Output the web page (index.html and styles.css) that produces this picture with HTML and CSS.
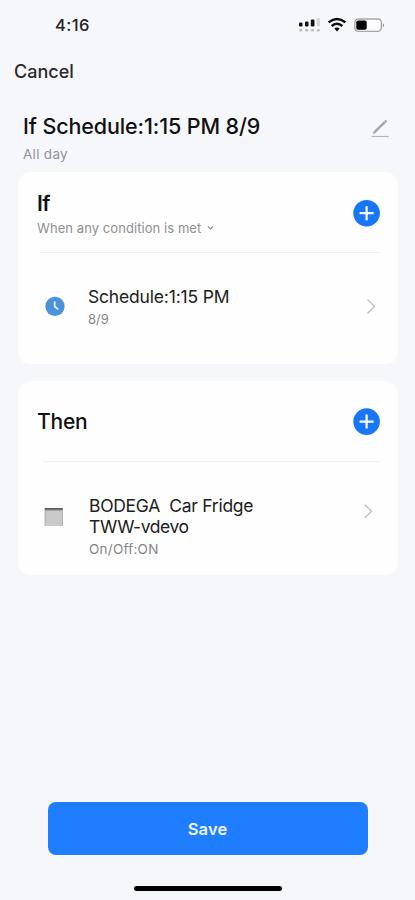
FILE: index.html
```html
<!DOCTYPE html>
<html lang="en">
<head>
<meta charset="utf-8">
<title>Schedule</title>
<link rel="stylesheet" href="styles.css">
</head>
<body>
<div class="screen">
  <header class="status">
    <span class="time">4:16</span>
    <svg class="status-icons" width="90" height="20" viewBox="0 0 90 20">
      <g fill="#111"><rect x="4" y="7.5" width="3.5" height="4" rx="1.2"/><rect x="10" y="6.5" width="3.5" height="5" rx="1.2"/><rect x="15.8" y="4.5" width="3.7" height="7" rx="1.2"/></g>
      <rect x="21.8" y="3" width="3" height="8.5" rx="1" fill="#d3d4d7"/>
      <g fill="#b9babd"><rect x="4.2" y="14" width="3" height="2.6" rx="1"/><rect x="10.2" y="14" width="3" height="2.6" rx="1"/><rect x="16" y="14" width="3" height="2.6" rx="1"/><rect x="21.8" y="14" width="3" height="2.6" rx="1"/></g>
      <g fill="none" stroke="#0b0b0b" stroke-width="2.4"><path d="M33.6 7.4Q42 .6 50.4 7.4"/><path d="M36.6 11Q42 6.6 47.4 11"/></g>
      <path d="M39.3 13.4Q42 11.4 44.7 13.4L42 16.4Z" fill="#0b0b0b"/>
      <rect x="59.8" y="4" width="26.6" height="12.4" rx="3.8" fill="#fbfbfc" stroke="#a6a7a9" stroke-width="1.4"/>
      <rect x="61.3" y="5.5" width="10.4" height="9.2" rx="1.8" fill="#000"/>
      <path d="M87.8 8.2q2.4 2 0 4z" fill="#8c8d90"/>
    </svg>
  </header>
  <nav class="nav"><span class="cancel">Cancel</span></nav>
  <section class="heading">
    <div>
      <h1 class="title">If Schedule:1:15 PM 8/9</h1>
      <p class="subtitle">All day</p>
    </div>
    <svg class="edit" width="20" height="20" viewBox="0 0 20 20"><path d="M4.6 13.2 14.8 3.2" stroke="#a3a4a7" stroke-width="2.5"/><path d="M15 3 16.3 1.7" stroke="#a3a4a7" stroke-width="2.5"/><path d="M3 15 3.6 12.3 5.6 14.2Z" fill="#a3a4a7"/><path d="M1.5 17.5H18.7" stroke="#b4b5b8" stroke-width="1.2"/></svg>
  </section>
  <section class="card card-if">
    <div class="card-head">
      <div>
        <h2 class="card-title">If</h2>
        <p class="condition"><span class="condition-text">When any condition is met</span><svg width="7" height="6" viewBox="0 0 7 6"><path d="M.9 1.4 3.5 4 6.1 1.4" fill="none" stroke="#85868a" stroke-width="1.1"/></svg></p>
      </div>
      <svg class="add" width="28" height="28" viewBox="0 0 28 28"><circle cx="14.6" cy="14.2" r="13.3" fill="#1877f6"/><path d="M7.6 14.2H21.6M14.6 7.2V21.2" stroke="#fff" stroke-width="2.2"/></svg>
    </div>
    <div class="row">
      <svg class="clock" width="20" height="20" viewBox="0 0 20 20"><circle cx="10" cy="10.4" r="9.6" fill="#4a92dc"/><path d="M9.7 5.4V10.6L13.3 13.4" fill="none" stroke="#e6f1fc" stroke-width="1.8"/></svg>
      <div class="row-text">
        <div class="name name-schedule">Schedule:1:15 PM</div>
        <div class="detail detail-date">8/9</div>
      </div>
      <svg class="chevron" width="10" height="16" viewBox="0 0 10 16"><path d="M1.5 1.6 8.5 8.4 1.5 15.2" fill="none" stroke="#c2c2c4" stroke-width="1.4"/></svg>
    </div>
  </section>
  <section class="card card-then">
    <div class="card-head">
      <h2 class="card-title title-then">Then</h2>
      <svg class="add" width="28" height="28" viewBox="0 0 28 28"><circle cx="14.6" cy="13.6" r="13.3" fill="#1877f6"/><path d="M7.6 13.6H21.6M14.6 6.6V20.6" stroke="#fff" stroke-width="2.2"/></svg>
    </div>
    <div class="row">
      <svg class="fridge" width="20" height="20" viewBox="0 0 20 20"><rect x=".8" y="1.2" width="18" height="17.8" fill="#cacaca"/><path d="M1.2 2V19M18.4 2V19" stroke="#a9a9a9" stroke-width=".9"/><path d="M.8 1.9H18.8" stroke="#575757" stroke-width="1.7"/><path d="M1 3.5H18.6" stroke="#a8a8a8" stroke-width="1"/></svg>
      <div class="row-text">
        <div class="name name-device">BODEGA&nbsp; Car Fridge</div>
        <div class="name name-model">TWW-vdevo</div>
        <div class="detail detail-state">On/Off:ON</div>
      </div>
      <svg class="chevron" width="10" height="16" viewBox="0 0 10 16"><path d="M1.5 1.5 8.5 8.3 1.5 15.1" fill="none" stroke="#c2c2c4" stroke-width="1.4"/></svg>
    </div>
  </section>
  <footer class="footer">
    <button class="save" type="button">Save</button>
    <div class="home"></div>
  </footer>
</div>
</body>
</html>
```
FILE: styles.css
```css
* { box-sizing: border-box; }
body, h1, h2, p { margin: 0; }
body { background: #f5f7fb; font-family: Inter, "Liberation Sans", sans-serif; color: #111; }
svg { display: block; flex: none; }
.screen { width: 415px; height: 900px; display: flex; flex-direction: column; overflow: hidden; white-space: nowrap; }
.status { height: 50px; padding: 14px 30px 0 55px; display: flex; justify-content: space-between; align-items: flex-start; }
.status-icons { margin-top: 1px; }
.time { font-size: 16.5px; line-height: 22px; font-weight: 500; letter-spacing: .4px; color: #222; }
.nav { height: 62px; padding: 11px 14px 0; }
.cancel { display: block; font-size: 18px; line-height: 22px; font-weight: 500; color: #2a2a2c; }
.heading { height: 60px; padding: 0 25px 0 23px; display: flex; justify-content: space-between; }
.title { font-size: 21.5px; line-height: 28px; font-weight: 500; letter-spacing: -.12px; }
.subtitle { margin-top: 5px; font-size: 13.5px; line-height: 18px; letter-spacing: .3px; color: #929396; }
.edit { margin-top: 7px; }
.card { margin: 0 17px 0 18px; border-radius: 13px; background: #fefefe; }
.card-if { height: 192px; }
.card-then { height: 194px; margin-top: 17px; }
.card-head { height: 81px; margin: 0 18px 0 19px; display: flex; justify-content: space-between; position: relative; }
.card-head::after { content: ""; position: absolute; left: 3px; right: 0; bottom: 0; height: 1px; background: #efeff1; }
.card-if .card-head { padding-top: 19px; }
.card-then .card-head { padding-top: 27px; }
.card-then .card-head::after { left: 6px; }
.card-title { font-size: 21px; line-height: 26px; font-weight: 600; letter-spacing: -.5px; }
.card-title.title-then { line-height: 28px; font-weight: 500; letter-spacing: -.2px; }
.condition { display: flex; align-items: center; gap: 6px; margin-top: 2px; font-size: 13px; line-height: 18px; letter-spacing: .07px; color: #8e8f92; }
.card-if .add { margin-top: 8px; }
.row { display: flex; align-items: flex-start; padding-left: 27px; }
.card-if .row { padding-right: 22px; }
.card-then .row { padding-right: 25px; padding-left: 26px; }
.row-text { flex: 1; padding: 33px 0 0 23px; }
.card-then .row-text { padding: 33px 0 0 25px; }
.clock { margin-top: 43px; }
.fridge { margin-top: 45px; }
.card-if .chevron { margin-top: 45px; }
.card-then .chevron { margin-top: 41px; }
.name { font-size: 17.5px; line-height: 21px; font-weight: 400; color: #202020; }
.name-schedule { letter-spacing: -.18px; }
.name-device { letter-spacing: -.28px; }
.name-model { letter-spacing: -.42px; }
.detail { font-size: 13px; line-height: 18px; margin-top: 3px; color: #858689; }
.detail-state { font-size: 13.5px; letter-spacing: .25px; }
.footer { margin-top: auto; height: 98px; display: flex; flex-direction: column; align-items: center; }
.save { width: 320px; height: 53px; border: 0; border-radius: 8px; background: #1f7eff; color: #eef5ff; font: 600 16.5px/24px Inter, "Liberation Sans", sans-serif; letter-spacing: .1px; }
.home { width: 148px; height: 5px; margin-top: 31px; border-radius: 3px; background: #000; }
```
